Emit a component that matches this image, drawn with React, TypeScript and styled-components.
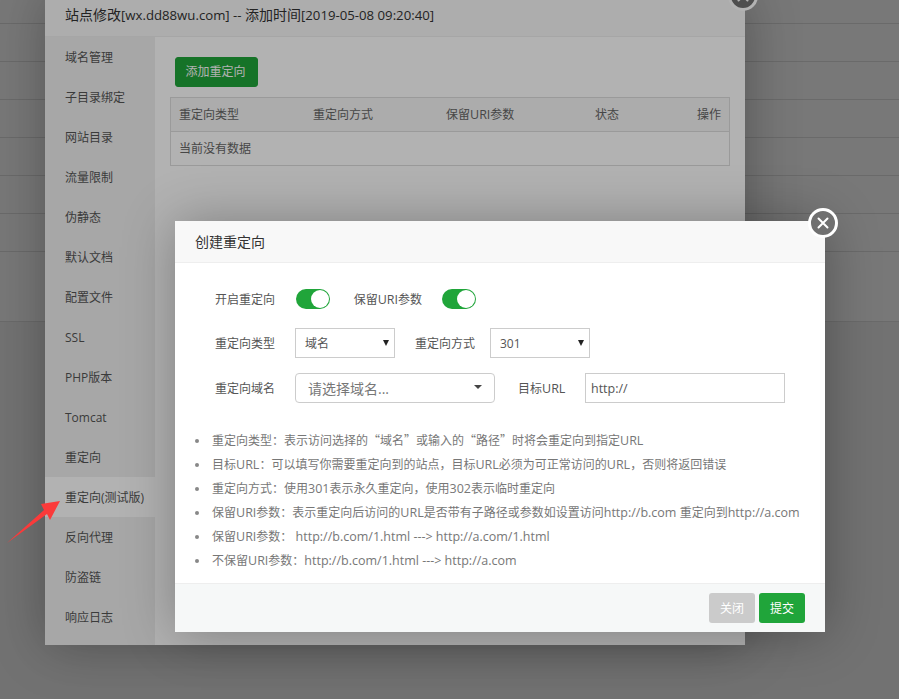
import React from "react";
import styled, { createGlobalStyle } from "styled-components";

const Global = createGlobalStyle`
  html, body { margin: 0; padding: 0; height: 100%; overflow: hidden; background: #f0f0f0; }
  * { box-sizing: border-box; }
  #root { height: 100%; }
  body { font-family: "Open Sans", "Noto Sans CJK SC", sans-serif; font-size: 12px; color: #666; }
`;

const Stage = styled.div`
  position: relative;
  width: 899px;
  height: 699px;
  overflow: hidden;
  background: #f6f6f6;
`;

const PageRows = styled.div`
  margin-top: -14px;
  display: flex;
  flex-direction: column;
  height: 713px;
`;

const PageRow = styled.div<{ $h: number }>`
  height: ${(p) => p.$h}px;
  flex: none;
  border-bottom: 1px solid #dadada;
`;

const PageTail = styled.div`
  flex: 1;
  background: #ebebeb;
`;

const Shade = styled.div<{ $a: number }>`
  position: absolute;
  inset: 0;
  background: rgba(0, 0, 0, ${(p) => p.$a});
`;

const Dialog = styled.div<{ $x: number; $y: number; $w: number; $h: number }>`
  position: absolute;
  left: ${(p) => p.$x}px;
  top: ${(p) => p.$y}px;
  width: ${(p) => p.$w}px;
  height: ${(p) => p.$h}px;
  background: #fff;
  box-shadow: 1px 1px 50px rgba(0, 0, 0, 0.3);
  display: flex;
  flex-direction: column;
`;

const CloseBtn = styled.div`
  position: absolute;
  right: -13px;
  top: -13px;
  width: 30px;
  height: 30px;
  border-radius: 50%;
  border: 3px solid #fff;
  background: #707070;
  display: flex;
  align-items: center;
  justify-content: center;
`;

const DialogTitle = styled.div<{ $h: number }>`
  height: ${(p) => p.$h}px;
  flex: none;
  padding: 0 0 2px 20px;
  display: flex;
  align-items: center;
  font-size: 14px;
  color: #333;
  background: #f8f8f8;
  border-bottom: 1px solid #eee;
`;

const TitleText = styled.span`
  white-space: pre;
`;

const SiteBody = styled.div`
  flex: 1;
  display: flex;
  min-height: 0;
`;

const Side = styled.div`
  width: 110px;
  flex: none;
  background: #f0f0f0;
  display: flex;
  flex-direction: column;
`;

const SideItem = styled.div<{ $active?: boolean }>`
  height: 40px;
  flex: none;
  padding-left: 20px;
  display: flex;
  align-items: center;
  color: #555;
  background: ${(p) => (p.$active ? "#fff" : "transparent")};
`;

const SiteMain = styled.div`
  flex: 1;
  padding: 20px 15px;
`;

const GreenBtn = styled.button`
  height: 30px;
  width: 83px;
  margin-left: 5px;
  padding: 0 2px 2px 0;
  border: 1px solid #20a53a;
  border-radius: 3px;
  background: #20a53a;
  color: #fff;
  font: inherit;
  display: block;
`;

const RuleTable = styled.div`
  margin-top: 10px;
  width: 560px;
  border: 1px solid #ddd;
`;

const RuleHead = styled.div`
  height: 34px;
  display: grid;
  grid-template-columns: 134px 133px 149px 102px 1fr;
  align-items: center;
  padding: 0 8px 2px;
  background: #f6f6f6;
  border-bottom: 1px solid #ddd;
  color: #666;
`;

const RuleHeadLast = styled.span`
  text-align: right;
`;

const RuleEmpty = styled.div`
  height: 33px;
  display: flex;
  align-items: center;
  padding: 0 8px 2px;
  color: #666;
`;

const Form = styled.div`
  flex: 1;
  padding: 26px 40px 0 40px;
  display: flex;
  flex-direction: column;
`;

const FormRow = styled.div<{ $h: number; $mb: number }>`
  height: ${(p) => p.$h}px;
  margin-bottom: ${(p) => p.$mb}px;
  display: flex;
  align-items: center;
  flex: none;
`;

const Label = styled.label<{ $w: number; $ml?: number }>`
  width: ${(p) => p.$w}px;
  margin-left: ${(p) => p.$ml ?? 0}px;
  flex: none;
  text-align: right;
  color: #555;
  white-space: nowrap;
`;

const Toggle = styled.div<{ $ml: number }>`
  width: 34px;
  height: 20px;
  margin-left: ${(p) => p.$ml}px;
  flex: none;
  border-radius: 10px;
  background: #20a53a;
  display: flex;
  justify-content: flex-end;
  padding: 1px;
`;

const Knob = styled.span`
  width: 18px;
  height: 18px;
  border-radius: 50%;
  background: #fff;
`;

const SelectWrap = styled.div<{ $ml: number }>`
  position: relative;
  width: 100px;
  height: 30px;
  margin-left: ${(p) => p.$ml}px;
  flex: none;

  &::after {
    content: "";
    position: absolute;
    right: 6px;
    top: 12px;
    border-left: 3.5px solid transparent;
    border-right: 3.5px solid transparent;
    border-top: 6px solid #222;
    pointer-events: none;
  }
`;

const NativeSelect = styled.select`
  appearance: none;
  width: 100%;
  height: 100%;
  padding: 0 0 0 9px;
  border: 1px solid #ccc;
  border-radius: 0;
  background: #fff;
  color: #555;
  font: inherit;
`;

const Picker = styled.div`
  width: 200px;
  height: 30px;
  margin-left: 20px;
  flex: none;
  border: 1px solid #ccc;
  border-radius: 4px;
  padding: 0 12px;
  display: flex;
  align-items: center;
  justify-content: space-between;
  font-size: 14px;
  color: #777;
`;

const PickerCaret = styled.span`
  border-left: 4px solid transparent;
  border-right: 4px solid transparent;
  border-top: 4px solid #444;
  margin-top: -3px;
`;

const UrlInput = styled.input`
  width: 200px;
  height: 30px;
  margin-left: 20px;
  flex: none;
  border: 1px solid #ccc;
  padding: 0 5px;
  color: #555;
  font: inherit;
  font-size: 12.5px;
  outline: none;
`;

const Notes = styled.ul`
  margin: 25px 0 0 -20px;
  padding: 0;
  list-style: none;
`;

const Note = styled.li`
  height: 24px;
  line-height: 24px;
  padding-left: 17px;
  position: relative;
  color: #777;
  white-space: nowrap;

  &::before {
    content: "";
    position: absolute;
    left: 0;
    top: 11px;
    width: 4px;
    height: 4px;
    border-radius: 50%;
    background: #888;
  }
`;

const Han = styled.span`
  font-family: "Noto Sans CJK SC", sans-serif;
`;

const Latin = styled.span<{ $size: number }>`
  font-family: "Open Sans", sans-serif;
  font-size: ${(p) => p.$size}px;
`;

const Footer = styled.div`
  height: 49px;
  flex: none;
  background: #f6f8f8;
  border-top: 1px solid #eee;
  display: flex;
  justify-content: flex-end;
  align-items: center;
  gap: 4px;
  padding-right: 20px;
`;

const FootBtn = styled.button<{ $tone: "grey" | "green" }>`
  width: 46px;
  height: 30px;
  padding: 0;
  border: none;
  border-radius: 3px;
  color: #fff;
  font: inherit;
  background: ${(p) => (p.$tone === "grey" ? "#cbcbcb" : "#20a53a")};
`;

const ArrowSvg = styled.svg`
  position: absolute;
  left: 0;
  top: 490px;
`;

const Cross = () => (
  <svg width="12" height="12" viewBox="0 0 12 12">
    <path d="M1.5 1.5 L10.5 10.5 M10.5 1.5 L1.5 10.5" stroke="#fff" strokeWidth="2" strokeLinecap="round" />
  </svg>
);

const Mixed = ({ text, size }: { text: string; size: number }) => (
  <>
    {text.split(/([\x00-\x7F]+)/).map((part, i) =>
      i % 2 ? (
        <Latin key={i} $size={size}>
          {part}
        </Latin>
      ) : (
        part && <Han key={i}>{part}</Han>
      )
    )}
  </>
);

const sideItems = ["域名管理", "子目录绑定", "网站目录", "流量限制", "伪静态", "默认文档", "配置文件", "SSL", "PHP版本", "Tomcat", "重定向", "重定向(测试版)", "反向代理", "防盗链", "响应日志"];

const notes = [
  "重定向类型：表示访问选择的“域名”或输入的“路径”时将会重定向到指定URL",
  "目标URL：可以填写你需要重定向到的站点，目标URL必须为可正常访问的URL，否则将返回错误",
  "重定向方式：使用301表示永久重定向，使用302表示临时重定向",
  "保留URI参数：表示重定向后访问的URL是否带有子路径或参数如设置访问http://b.com 重定向到http://a.com",
  "保留URI参数： http://b.com/1.html ---> http://a.com/1.html",
  "不保留URI参数：http://b.com/1.html ---> http://a.com",
];

const rowHeights = [38, 38, 38, 38, 38, 38, 38, 70];

export default function App() {
  return (
    <Stage>
      <Global />
      <PageRows>
        {rowHeights.map((h, i) => (
          <PageRow key={i} $h={h} />
        ))}
        <PageTail />
      </PageRows>
      <Shade $a={0.3} />
      <Dialog $x={45} $y={-6} $w={700} $h={651}>
        <CloseBtn>
          <Cross />
        </CloseBtn>
        <DialogTitle $h={43}>
          <TitleText>
            <Mixed text="站点修改[wx.dd88wu.com] -- 添加时间[2019-05-08 09:20:40]" size={13.2} />
          </TitleText>
        </DialogTitle>
        <SiteBody>
          <Side>
            {sideItems.map((s, i) => (
              <SideItem key={s} $active={i === 11}>
                {s}
              </SideItem>
            ))}
          </Side>
          <SiteMain>
            <GreenBtn>添加重定向</GreenBtn>
            <RuleTable>
              <RuleHead>
                <span>重定向类型</span>
                <span>重定向方式</span>
                <span>
                  <Mixed text="保留URI参数" size={12.5} />
                </span>
                <span>状态</span>
                <RuleHeadLast>操作</RuleHeadLast>
              </RuleHead>
              <RuleEmpty>当前没有数据</RuleEmpty>
            </RuleTable>
          </SiteMain>
        </SiteBody>
      </Dialog>
      <Shade $a={0.3} />
      <Dialog $x={175} $y={221} $w={650} $h={411}>
        <CloseBtn>
          <Cross />
        </CloseBtn>
        <DialogTitle $h={42}>创建重定向</DialogTitle>
        <Form>
          <FormRow $h={20} $mb={19}>
            <Label $w={60}>开启重定向</Label>
            <Toggle $ml={21}>
              <Knob />
            </Toggle>
            <Label $w={69} $ml={23}>
              <Mixed text="保留URI参数" size={12.5} />
            </Label>
            <Toggle $ml={20}>
              <Knob />
            </Toggle>
          </FormRow>
          <FormRow $h={30} $mb={15}>
            <Label $w={60}>重定向类型</Label>
            <SelectWrap $ml={20}>
              <NativeSelect defaultValue="域名">
                <option>域名</option>
                <option>路径</option>
              </NativeSelect>
            </SelectWrap>
            <Label $w={60} $ml={20}>重定向方式</Label>
            <SelectWrap $ml={15}>
              <NativeSelect defaultValue="301">
                <option>301</option>
                <option>302</option>
              </NativeSelect>
            </SelectWrap>
          </FormRow>
          <FormRow $h={30} $mb={0}>
            <Label $w={60}>重定向域名</Label>
            <Picker>
              <span>请选择域名...</span>
              <PickerCaret />
            </Picker>
            <Label $w={47} $ml={23}>
              <Mixed text="目标URL" size={12.5} />
            </Label>
            <UrlInput defaultValue="http://" />
          </FormRow>
          <Notes>
            {notes.map((n) => (
              <Note key={n}>
                <Mixed text={n} size={12.5} />
              </Note>
            ))}
          </Notes>
        </Form>
        <Footer>
          <FootBtn $tone="grey">关闭</FootBtn>
          <FootBtn $tone="green">提交</FootBtn>
        </Footer>
      </Dialog>
      <ArrowSvg width="70" height="60" viewBox="0 490 70 60">
        <polygon points="7,543 44,510 41,504 60,501 50,520 47,514" fill="#fb3a3a" />
      </ArrowSvg>
    </Stage>
  );
}
